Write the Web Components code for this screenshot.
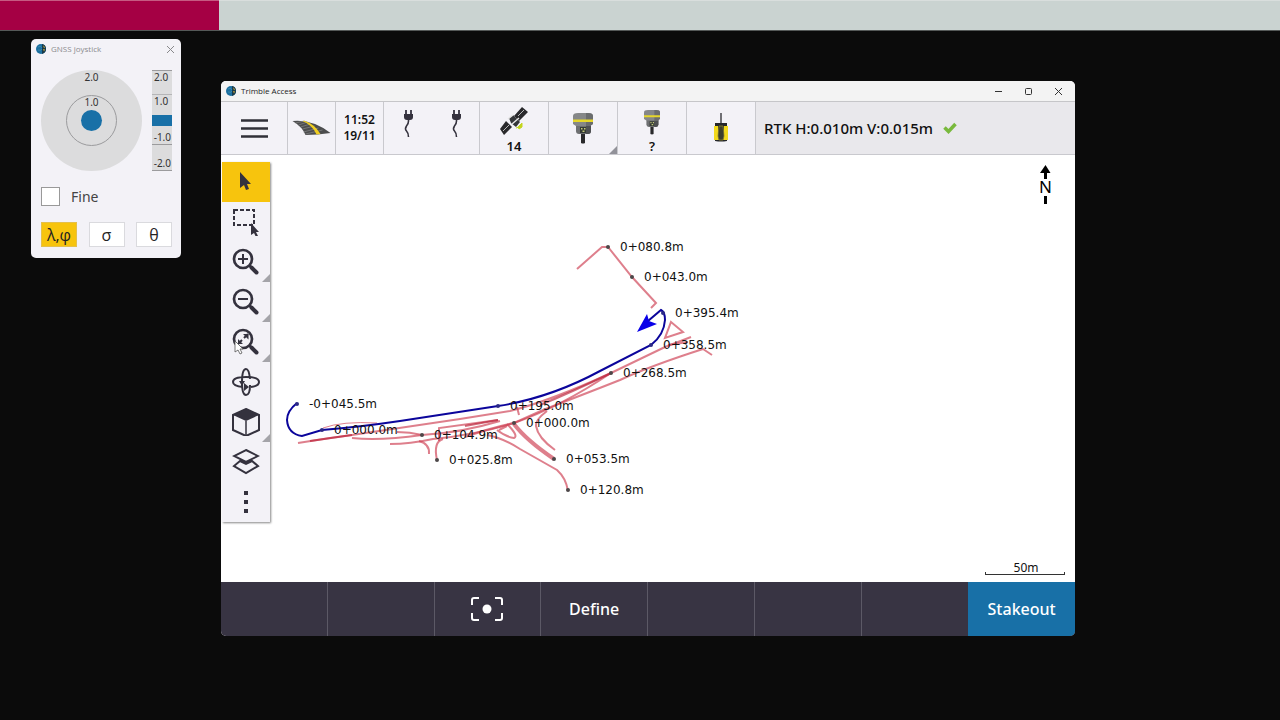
<!DOCTYPE html>
<html lang="en">
<head>
<meta charset="utf-8">
<title>Trimble Access</title>
<style>
  body { margin: 0; background: #0b0b0b; font-family: "Noto Sans", sans-serif; color: #111; }
</style>
</head>
<body>
<desk-top>
  <progress-strip slot="strip"></progress-strip>
  <app-window slot="tool" name="GNSS joystick" muted>
    <gnss-joystick></gnss-joystick>
  </app-window>
  <app-window slot="main" name="Trimble Access" full>
    <status-bar></status-bar>
    <map-view>
      <map-tools></map-tools>
    </map-view>
    <soft-keys></soft-keys>
  </app-window>
</desk-top>

<script>
const define = (name, html, setup) => customElements.define(name, class extends HTMLElement {
  constructor() {
    super();
    this.attachShadow({ mode: 'open' });
    this.shadowRoot.innerHTML = html;
  }
  connectedCallback() { if (setup) setup(this.shadowRoot, this); }
});

const buttonReset = `button { appearance: none; border: 0; margin: 0; padding: 0; background: none; font: inherit; color: inherit; cursor: pointer; }
  * { box-sizing: border-box; } svg { display: block; }`;

define('desk-top', `
  <style>
    :host { display: flex; flex-direction: column; min-height: 100vh; }
    main { flex: 1; display: grid; grid-template-columns: 150px minmax(0, 1fr); column-gap: 40px; padding: 8px 205px 84px 31px; }
    .tool { align-self: start; }
    .main { display: grid; margin-top: 42px; }
  </style>
  <slot name="strip"></slot>
  <main>
    <div class="tool"><slot name="tool"></slot></div>
    <div class="main"><slot name="main"></slot></div>
  </main>`);

define('progress-strip', `
  <style>
    :host { display: block; height: 31px; background: #cad3d1; box-sizing: border-box; border-top: 1px solid #d9dedd; border-bottom: 1px solid #555958; }
    div { width: 17.1%; height: 100%; background: #a50044; box-shadow: 0 -1px #c65a82; }
  </style>
  <div></div>`);

define('app-window', `
  <style>
    ${buttonReset}
    :host { display: flex; flex-direction: column; background: #f3f2f7; border-radius: 5px; overflow: hidden; }
    header { display: flex; align-items: center; gap: 5px; height: 20px; padding: 0 5px; font-family: "Open Sans", sans-serif; font-size: 8px; line-height: 20px; flex: none; }
    h1 { margin: 0; font: inherit; flex: 1; }
    :host([full]) header { background: #f3f3f3; border-bottom: 1px solid #c6c6c9; height: 21px; padding: 0 9px 0 5px; color: #222; }
    :host([muted]) h1 { color: #8b8b8e; }
    nav { display: flex; gap: 15px; }
    nav button { width: 15px; height: 15px; }
    nav svg { width: 15px; height: 15px; fill: none; stroke: #333; stroke-width: 1; }
    :host([muted]) nav svg { stroke: #88888b; }
    :host([muted]) nav { margin-right: -2px; }
    :host([muted]) nav button:not(:last-child) { display: none; }
  </style>
  <header>
    <svg width="10" height="10" viewBox="0 0 10 10"><circle cx="5" cy="5" r="5" fill="#1b6f9f"/><path d="M6 0a5 5 0 0 1 4 5a5 5 0 0 1-4 5z" fill="#173a4c"/><path d="M7 1.200l2 2-1 1zM7 5l2 .5-1 2z" fill="#d7ad37"/><path d="M2 3q3-2 4 1M2 6q3 1 4-1" stroke="#4e9abb" stroke-width=".6" fill="none"/></svg>
    <h1></h1>
    <nav>
      <button aria-label="Minimise"><svg viewBox="0 0 15 15"><path d="M4 7.500h7"/></svg></button>
      <button aria-label="Maximise"><svg viewBox="0 0 15 15"><rect x="4.500" y="4.500" width="6" height="6" rx="1"/></svg></button>
      <button aria-label="Close"><svg viewBox="0 0 15 15"><path d="M4 4l7 7M11 4l-7 7"/></svg></button>
    </nav>
  </header>
  <slot></slot>`, (root, host) => { root.querySelector('h1').textContent = host.getAttribute('name'); });

define('gnss-joystick', `
  <style>
    ${buttonReset}
    :host { display: block; padding: 11px 9px 11px 10px; color: #333; }
    .pads { display: flex; justify-content: space-between; font-size: 10px; line-height: 12px; }
    .dial { width: 101px; height: 101px; border-radius: 50%; background: #dcdcdd; display: grid; justify-items: center; align-content: start; }
    .dial span { margin-top: 1px; }
    .inner { width: 51px; height: 51px; border: 1px solid #9b9b9d; border-radius: 50%; margin-top: 12px; display: grid; justify-items: center; align-content: start; }
    .inner span { margin-top: 0; }
    .inner i { width: 21px; height: 21px; border-radius: 50%; background: #1870a7; margin-top: 2px; }
    .lift { width: 20px; height: 101px; display: grid; grid-template-rows: 24px 1fr 11px 19px 25px; background: #dcdcdd; border: solid #9b9b9d; border-width: 1px 0; }
    .lift span { padding: 0 2px; }
    .lift span:first-child { border-bottom: 1px solid #b5b5b7; }
    .lift i { background: #1870a7; }
    .lift .down { display: flex; align-items: flex-end; justify-content: flex-end; padding: 0 1px 1px; }
    .lift .down:nth-child(4) { border-bottom: 1px solid #9b9b9d; }
    label { display: flex; align-items: center; gap: 11px; margin-top: 16px; font-size: 14px; line-height: 19px; color: #444; }
    input { appearance: none; width: 19px; height: 19px; margin: 0; border: 1px solid #999; background: #fff; }
    .modes { display: grid; grid-template-columns: repeat(3, 36px); justify-content: space-between; margin-top: 16px; }
    .modes button { height: 25px; background: #fff; border: 1px solid #dadade; font-family: "Open Sans", sans-serif; font-size: 16px; line-height: 22px; color: #222; font-weight: 500; }
    .modes .on { background: #f7c40d; border-color: #e5c04a; }
  </style>
  <div class="pads">
    <div class="dial"><span>2.0</span><div class="inner"><span>1.0</span><i></i></div></div>
    <div class="lift"><span>2.0</span><span>1.0</span><i></i><span class="down">-1.0</span><span class="down">-2.0</span></div>
  </div>
  <label><input type="checkbox">Fine</label>
  <div class="modes"><button class="on">λ,φ</button><button>σ</button><button>θ</button></div>`);

const receiver = `<path d="M8 20h4v10q-2 1-4 0z" fill="#29292b"/><path d="M3 12h15v6q0 3-3 3H6q-3 0-3-3z" fill="#6e7072"/><path d="M13 12h5v6q0 3-3 3h-2z" fill="#4e5052"/><path d="M0 3q0-3 5-3h10q5 0 5 3v8l-3 2H3L0 11z" fill="#858788"/><path d="M15 0q5 0 5 3v8l-3 2h-4V0z" fill="#6a6c6e"/><path d="M0 6.500h20V9H0z" fill="#e6d72b"/><path d="M7 14h6v6H7z" fill="#343a35"/><path d="M8 15h1.500v1.500H8zM11 15h1.500v1.500H11zM9.500 17.500h2V19h-2z" fill="#c4c97c"/>`;
const plug = `<svg width="12" height="30" viewBox="0 0 12 30"><path d="M4 1v5M9 1v5" stroke="#34323e" stroke-width="1.800"/><path d="M2 5h9v3q0 3-3 3H5q-3 0-3-3z" fill="#34323e"/><path d="M6.500 10v2q0 3-2 5-2 3 0 5 2 2 2 6" fill="none" stroke="#34323e" stroke-width="1.600"/></svg>`;

define('status-bar', `
  <style>
    ${buttonReset}
    :host { display: flex; box-sizing: border-box; height: 53px; flex: none; border-bottom: 1px solid #c9c9ce; background: #f3f2f7; font-weight: 600; }
    button { display: flex; flex-direction: column; align-items: center; justify-content: center; border-right: 1px solid #c9c9ce; flex: none; position: relative; }
    .menu { width: 67px; }
    .w48 { width: 48px; font-size: 12px; line-height: 16px; }
    .ports { width: 96px; flex-direction: row; gap: 36px; padding-bottom: 8px; }
    .w69 { width: 69px; font-size: 13px; line-height: 16px; }
    .named { justify-content: flex-end; gap: 3px; }
    .corner::after { content: ""; position: absolute; right: 0; bottom: 0; border: 4px solid; border-color: transparent #929299 #929299 transparent; }
    p { margin: 0; flex: 1; display: flex; align-items: center; gap: 10px; padding: 0 0 0 8px; background: #e9e8ec; font-size: 15px; font-weight: 500; white-space: nowrap; }
  </style>
  <button class="menu" aria-label="Menu"><svg width="27" height="19"><path d="M0 1.500h27M0 9.500h27M0 17.500h27" stroke="#303038" stroke-width="2.500"/></svg></button>
  <button class="w48" aria-label="Road"><svg width="39" height="16" viewBox="0 0 38 16"><path d="M0 1Q20-1 38 13 25 15 13 15 10 7 0 1z" fill="#4c4d4e"/><path d="M3 3l9-2M6 5l9-3M8 7l10-3M10 9l12-3M11 12l15-4M13 14l17-4" stroke="#858787" stroke-width=".7"/><path d="M12 .7Q22 4 28 14l-4 .500Q20 5 10 1z" fill="#f0ce21"/></svg></button>
  <button class="w48"><span>11:52</span><span>19/11</span></button>
  <button class="ports" aria-label="Ports">${plug}${plug}</button>
  <button class="w69 named"><svg width="28" height="28" viewBox="0 0 28 28"><path d="M22 0l6 5-9 9-5-5zM6 14l6 6-8 8-4-6z" fill="#29292c"/><path d="M24 3l-6 6M9 18l-6 6" stroke="#bbb" stroke-width="1"/><path d="M9 11l4-3 7 7-4 5-5-4z" fill="#343639"/><path d="M8 12l5-4M12 17l7-6" stroke="#e4e4e4" stroke-width="1.500"/><path d="M18 20l4-4v4l-3 2zM16 21l3-1" fill="#c4d51e" stroke="#c4d51e"/></svg><span>14</span></button>
  <button class="w69 corner" aria-label="Receiver"><svg width="20" height="31" viewBox="0 0 20 31">${receiver}</svg></button>
  <button class="w69 named"><svg width="16" height="25" viewBox="0 0 20 31">${receiver}</svg><span class="q">?</span></button>
  <button class="w69" aria-label="Radio"><svg width="14" height="30" viewBox="0 0 14 30"><path d="M7 0v11" stroke="#37383c" stroke-width="1.400"/><path d="M1 10h12v18q-6 1-12 0z" fill="#25272a"/><path d="M0 13h4v10l1 4H0zM14 13h-4v10l-1 4h5z" fill="#f2d91c"/><path d="M5 13h4l1 10-1 4H5l-1-4z" fill="#3c3e2c" stroke="#8b842e" stroke-width=".8"/></svg></button>
  <p>RTK H:0.010m V:0.015m <svg width="14" height="12" viewBox="0 0 14 12"><path d="M1.500 5.500l4 4L12.500 2" stroke="#79b93d" stroke-width="3.500" fill="none"/></svg></p>`);

const lens = inner => `<svg viewBox="0 0 28 28"><circle cx="11" cy="11" r="9" stroke-width="2.700"/><path d="M17.500 17.500l2 2" stroke-width="2.500"/><path d="M19.500 19.500l5 5" stroke-width="4" stroke-linecap="round"/>${inner}</svg>`;
const tools = [
  ['Select', `<svg viewBox="0 0 28 28"><path class="f" d="M8 4v16l4-3 2 5 3-1-2-5h4z"/></svg>`],
  ['Box select', `<svg viewBox="0 0 28 28"><rect x="2" y="2" width="20" height="15" stroke-width="2" stroke-dasharray="4 2"/><path class="f" d="M19 15v12l3-2 2 4 2-1-2-4h3z" stroke="#f3f2f7" stroke-width=".8"/></svg>`],
  ['Zoom in', lens('<path d="M6 11h10M11 6v10" stroke-width="2"/>'), 1],
  ['Zoom out', lens('<path d="M6 11h10" stroke-width="2"/>'), 1],
  ['Zoom extents', lens('<path d="M6 16l4-4M12 10l4-4" stroke-width="2"/><path class="f" d="M11 6h5.500v5.500zM6 11v5h5z"/>'), 1],
  ['Orbit', `<svg viewBox="0 0 28 28"><path d="M11 19q-10-1-10-5 0-5 13-5t13 5q0 4-8 5M18 11Q17 1 14 1 10 1 10 14t4 13q4 0 4-10" stroke-width="2"/><path class="f" d="M12 15l5 4-5 4zM7 13h6l-3 5z"/></svg>`],
  ['View', `<svg viewBox="0 0 28 28"><path d="M14 1l13 6v15l-13 6-13-6V7z" stroke-width="2"/><path class="f" d="M14 1l13 6-13 6L1 7z"/><path d="M14 13v15" stroke-width="1.500"/></svg>`, 1],
  ['Layers', `<svg viewBox="0 0 28 28"><path d="M14 2l12 6-12 6L2 8zM8 13l-6 5 12 7 12-7-6-5-6 3z" stroke-width="2"/></svg>`],
  ['More', `<svg viewBox="0 0 28 28"><path class="f" d="M12 3h4v4h-4zM12 12h4v4h-4zM12 21h4v4h-4z"/></svg>`]
];

define('map-tools', `
  <style>
    ${buttonReset}
    :host { display: grid; width: 48px; background: #f3f2f7; box-shadow: 1px 1px 2px #888; }
    button { display: grid; place-items: center; height: 40px; position: relative; padding-right: 1px; }
    button.on { background: #f7c40d; }
    svg { width: 28px; height: 28px; fill: none; stroke: #34323e; }
    .f { fill: #34323e; stroke: none; }
    .corner::after { content: ""; position: absolute; right: 0; bottom: 0; border: 4px solid; border-color: transparent #a4a4a9 #a4a4a9 transparent; }
  </style>`, root => {
  tools.forEach(([label, icon, more], i) => {
    const b = document.createElement('button');
    b.setAttribute('aria-label', label);
    b.innerHTML = icon;
    if (i === 0) b.className = 'on';
    if (more) b.className = 'corner';
    root.append(b);
  });
});

const stations = [
  [608, 247, '0+080.8m'], [632, 277, '0+043.0m'], [663, 313, '0+395.4m', 1], [651, 345, '0+358.5m', 1],
  [611, 373, '0+268.5m'], [297, 404, '-0+045.5m', 1], [498, 406, '0+195.0m', 1], [514, 423, '0+000.0m'],
  [322, 430, '0+000.0m', 1], [422, 435, '0+104.9m'], [437, 460, '0+025.8m'], [554, 459, '0+053.5m'], [568, 490, '0+120.8m']
];

define('map-view', `
  <style>
    :host { display: block; position: relative; flex: 1; min-height: 380px; background: #fff; }
    .tools { padding: 7px 0 0 1px; display: flex; }
    .plan { position: absolute; top: 0; left: 0; width: 100%; height: 100%; }
    .plan text { font: 12px "DejaVu Sans", sans-serif; fill: #111; }
    .red { fill: none; stroke: #cf4256; stroke-opacity: .68; stroke-width: 2; }
    .blue { fill: none; stroke: #0b059b; stroke-width: 2; }
    .north { position: absolute; top: 10px; right: 22px; }
    .north text { font: 17px "Noto Sans", sans-serif; }
    .scale { position: absolute; right: 10px; bottom: 7px; width: 78px; height: 14px; padding-left: 2px; text-align: center; font-size: 12px; line-height: 14px; }
    .scale::after { content: ""; position: absolute; inset: auto 0 0 0; height: 2px; border: 1px solid #333; border-top: 0; }
    .cursor { position: absolute; top: 185px; left: 13px; }
    slot { position: relative; display: block; }
  </style>
  <svg class="plan"><g transform="translate(-221 -155)">
    <g class="red">
      <path d="M577 269L602 247H608L632 277 656 303 651 308"/>
      <path d="M298 443L330 438 352 435 460 419 510 411Q550 401 611 373L665 347 691 337"/>
      <path d="M323 428Q342 421 377 423" stroke-width="1"/>
      <path d="M352 438Q380 441 422 435 460 433 500 421"/>
      <path d="M397 432Q410 432 422 435"/>
      <path d="M390 444Q410 444 433 439 475 435 514 423L543 410Q600 388 620 380 650 366 703 349L712 355"/>
      <path d="M439 441V428L498 420"/>
      <path d="M465 437Q490 428 514 423 560 407 611 373"/>
      <path d="M419 441Q430 444 429 454M437 460Q433 442 443 439"/>
      <path d="M487 435Q503 438 520 449L557 470Q566 478 568 491"/>
      <path d="M497 430Q506 437 514 438 519 436 507 424M499 430l8-4"/>
      <path d="M514 424Q526 440 554 459" stroke-width="4"/>
      <path d="M547 411Q535 420 536 426 538 438 555 450M517 407l2 8"/>
      <path d="M671 322L683 332 665 338zM668 345L688 342"/>
    </g>
    <path d="M540 405Q570 393 611 373M465 426L498 420M310 441L352 435" fill="none" stroke="#b81f35" stroke-opacity=".65" stroke-width="2"/>
    <path class="blue" d="M297 403Q287 411 287 420 288 434 302 436L322 430Q360 427 400 421L498 406Q550 398 600 371L651 345Q664 335 665 320 665 312 661 310L648 321"/>
    <path d="M637 332L647 314 649 321 657 324z" fill="#0900e8"/>
    <g id="stations"></g>
  </g></svg>
  <svg class="north" width="15" height="40"><path d="M7.500 0l5 8H9v6H6V8H2zM6 31h3v8H6z"/><text x="1" y="28">N</text></svg>
  <div class="scale">50m</div>
  <div class="tools"><slot></slot></div>
  <svg class="cursor" width="10" height="16" viewBox="0 0 10 16"><path d="M1 1v11l3-2 2 4 2-1-2-4h3z" fill="#fff" stroke="#555" stroke-width=".8"/></svg>`, root => {
  root.querySelector('#stations').innerHTML = stations.map(([x, y, name, onRoute]) =>
    `<circle cx="${x}" cy="${y}" r="2" fill="${onRoute ? '#2c2a86' : '#4c4749'}"/><text x="${x + 12}" y="${y + 4}">${name}</text>`).join('');
});

define('soft-keys', `
  <style>
    ${buttonReset}
    :host { display: grid; grid-template-columns: repeat(8, 1fr); height: 54px; flex: none; background: #383443; color: #fff; font-size: 16px; font-weight: 500; }
    button { display: grid; place-items: center; border-right: 1px solid #5c5966; }
    button:nth-last-child(2) { border-right: 0; }
    .primary { background: #1870a7; border: 0; }
  </style>
  <button aria-label="Key 1"></button><button aria-label="Key 2"></button>
  <button aria-label="Snap"><svg width="32" height="24" viewBox="0 0 32 24" fill="none" stroke="#fff" stroke-width="2"><path d="M8 1H3Q1 1 1 3v5M24 1h5q2 0 2 2v5M8 23H3q-2 0-2-2v-5M24 23h5q2 0 2-2v-5"/><circle cx="16" cy="12" r="4.500" fill="#fff" stroke="none"/></svg></button>
  <button>Define</button>
  <button aria-label="Key 5"></button><button aria-label="Key 6"></button><button aria-label="Key 7"></button>
  <button class="primary">Stakeout</button>`);
</script>
</body>
</html>
